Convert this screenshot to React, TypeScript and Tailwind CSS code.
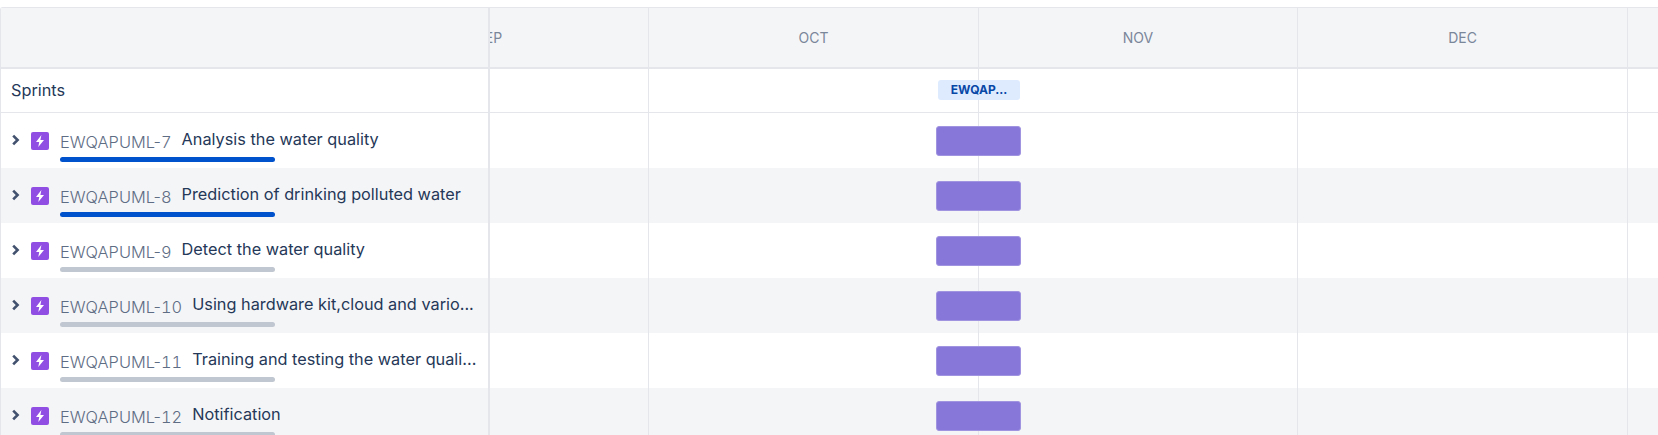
const issues = [
  { num: "7", title: "Analysis the water quality", done: true },
  { num: "8", title: "Prediction of drinking polluted water", done: true },
  { num: "9", title: "Detect the water quality", done: false },
  { num: "10", title: "Using hardware kit,cloud and vario...", done: false },
  { num: "11", title: "Training and testing the water quali...", done: false },
  { num: "12", title: "Notification", done: false },
];

function MonthCells({ labels }: { labels?: boolean }) {
  return (
    <div className="flex h-full w-[1400px] -ml-[160px]">
      <div className="flex w-[319px] shrink-0 items-center justify-center border-r border-[#e4e6ec] text-sm text-[#7a869a]">
        {labels && "SEP"}
      </div>
      <div className="flex w-[330px] shrink-0 items-center justify-center border-r border-[#e4e6ec] text-sm text-[#7a869a]">
        {labels && "OCT"}
      </div>
      <div className="flex w-[319px] shrink-0 items-center justify-center border-r border-[#e4e6ec] text-sm text-[#7a869a]">
        {labels && "NOV"}
      </div>
      <div className="flex w-[330px] shrink-0 items-center justify-center border-r border-[#e4e6ec] text-sm text-[#7a869a]">
        {labels && "DEC"}
      </div>
    </div>
  );
}

function EpicIcon() {
  return (
    <svg width="18" height="18" viewBox="0 0 18 18" className="shrink-0">
      <rect width="18" height="18" rx="2" fill="#904ee2" />
      <path d="M10.4 3 5 10h3.2l-.9 5L13 7.9H9.4z" fill="#fff" />
    </svg>
  );
}

function Chevron() {
  return (
    <svg width="8" height="12" viewBox="0 0 8 12" className="shrink-0">
      <path d="M1.2 1.6 5.6 6l-4.4 4.4" fill="none" stroke="#42526e" strokeWidth="2.6" />
    </svg>
  );
}

export default function App() {
  return (
    <div className="h-[435px] overflow-hidden bg-white pt-[7px] font-['Inter',sans-serif]">
      <div className="rounded-tl-[3px] border-t border-l border-[#e4e6ec]">
        <div className="flex h-[61px] border-b-2 border-[#e4e6ec] bg-[#f4f5f7]">
          <div className="w-[489px] shrink-0 border-r-2 border-[#e4e6ec]" />
          <div className="min-w-0 flex-1 overflow-hidden">
            <MonthCells labels />
          </div>
        </div>
        <div className="flex h-[44px] border-b border-[#e4e6ec]">
          <div className="flex w-[489px] shrink-0 items-center border-r-2 border-[#e4e6ec] pl-[10px] text-[16.3px] text-[#253858]">
            Sprints
          </div>
          <div className="relative min-w-0 flex-1 overflow-hidden">
            <MonthCells />
            <div className="absolute top-[11px] left-[448px] flex h-[20px] w-[82px] items-center justify-center rounded-[3px] bg-[#deebff] text-xs font-bold text-[#0747a6]">
              EWQAP...
            </div>
          </div>
        </div>
        {issues.map((issue, i) => (
          <div key={issue.num} className={`flex h-[55px] ${i % 2 === 1 ? "bg-[#f4f5f7]" : "bg-white"}`}>
            <div className="flex w-[489px] shrink-0 border-r-2 border-[#e4e6ec] pt-[17px] pl-[11px]">
              <div className="mt-[3px] flex h-[14px] items-center">
                <Chevron />
              </div>
              <div className="mt-[2px] ml-[11px]">
                <EpicIcon />
              </div>
              <div className="ml-[11px] min-w-0">
                <div className="flex h-[24px] items-center whitespace-nowrap">
                  <span className="mt-[1px] text-[16.4px] font-light text-[#5e6c84]">
                    EWQAPUML-<span className="tabular-nums">{issue.num}</span>
                  </span>
                  <span className="-mt-[5px] ml-[10px] text-[16.3px] text-[#253858]">{issue.title}</span>
                </div>
                <div className={`mt-[3px] h-[5px] w-[215px] rounded-full ${issue.done ? "bg-[#0052cc]" : "bg-[#c1c7d0]"}`} />
              </div>
            </div>
            <div className="relative min-w-0 flex-1 overflow-hidden">
              <MonthCells />
              <div className="absolute top-[13px] left-[446px] h-[30px] w-[85px] rounded-[3px] border border-[#a094e0] bg-[#8777d9]" />
            </div>
          </div>
        ))}
      </div>
    </div>
  );
}
